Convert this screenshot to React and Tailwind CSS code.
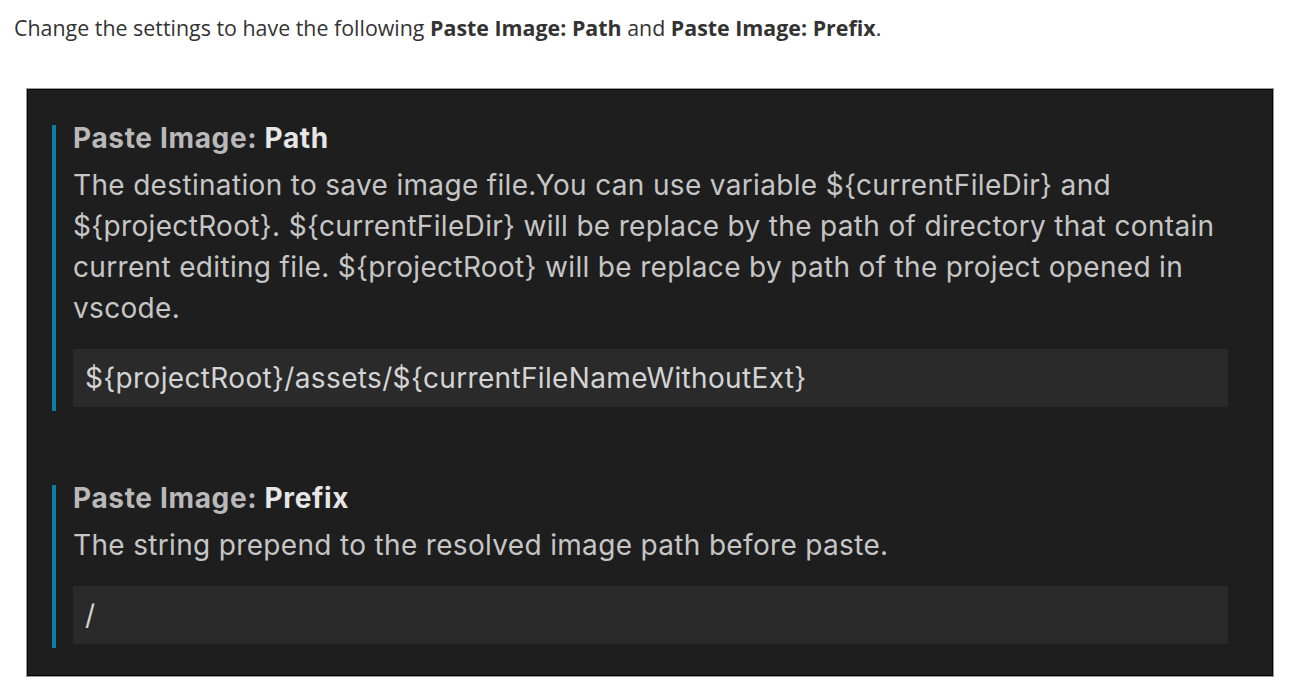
import React from 'react';

const sections = [
  {
    name: 'Path',
    lines: [
      'The destination to save image file.You can use variable ${currentFileDir} and',
      '${projectRoot}. ${currentFileDir} will be replace by the path of directory that contain',
      'current editing file. ${projectRoot} will be replace by path of the project opened in',
      'vscode.',
    ],
    value: '${projectRoot}/assets/${currentFileNameWithoutExt}',
  },
  {
    name: 'Prefix',
    lines: ['The string prepend to the resolved image path before paste.'],
    value: '/',
  },
];

const Setting = ({ name, lines, value }) => (
  <div className="flex">
    <div className="w-[4px] bg-[#0c7ea6] shrink-0" />
    <div className="flex-1 pl-[17px] pb-[4px]">
      <h3 className="text-[28px] leading-[28px] font-bold tracking-[0.65px] -mt-px text-[#b9b9b9]">
        Paste Image: <span className="text-[#e6e6e6]">{name}</span>
      </h3>
      <div className="mt-[13px] text-[28px] leading-[41px] tracking-[0.33px] text-[#c6c6c6]">
        {lines.map((line, i) => (
          <p key={i} className="whitespace-nowrap">{line}</p>
        ))}
      </div>
      <div className="mt-[20px] h-[58px] bg-[#2a2a2a] flex items-center px-[12px] text-[28px] tracking-[0.35px] text-[#d4d4d4]">
        {value}
      </div>
    </div>
  </div>
);

export default function App() {
  return (
    <div className="bg-white min-h-screen" style={{ fontFamily: '"Open Sans", "Noto Sans", sans-serif' }}>
      <p className="pt-[14px] pl-[14px] text-[21.4px] leading-[28px] text-[#333333]">
        Change the settings to have the following <b>Paste Image: Path</b> and{' '}
        <b>Paste Image: Prefix</b>.
      </p>
      <div className="ml-[26px] mt-[46px] w-[1248px] h-[589px] border border-[#9a9a9a]">
        <div
          className="h-full border border-[#050505] bg-[#1e1e1e] pt-[35px] pl-[24px] pr-[44px]"
          style={{ fontFamily: 'Inter, "Liberation Sans", sans-serif' }}
        >
          <div className="flex flex-col gap-[74px]">
            {sections.map((s) => (
              <Setting key={s.name} {...s} />
            ))}
          </div>
        </div>
      </div>
    </div>
  );
}
